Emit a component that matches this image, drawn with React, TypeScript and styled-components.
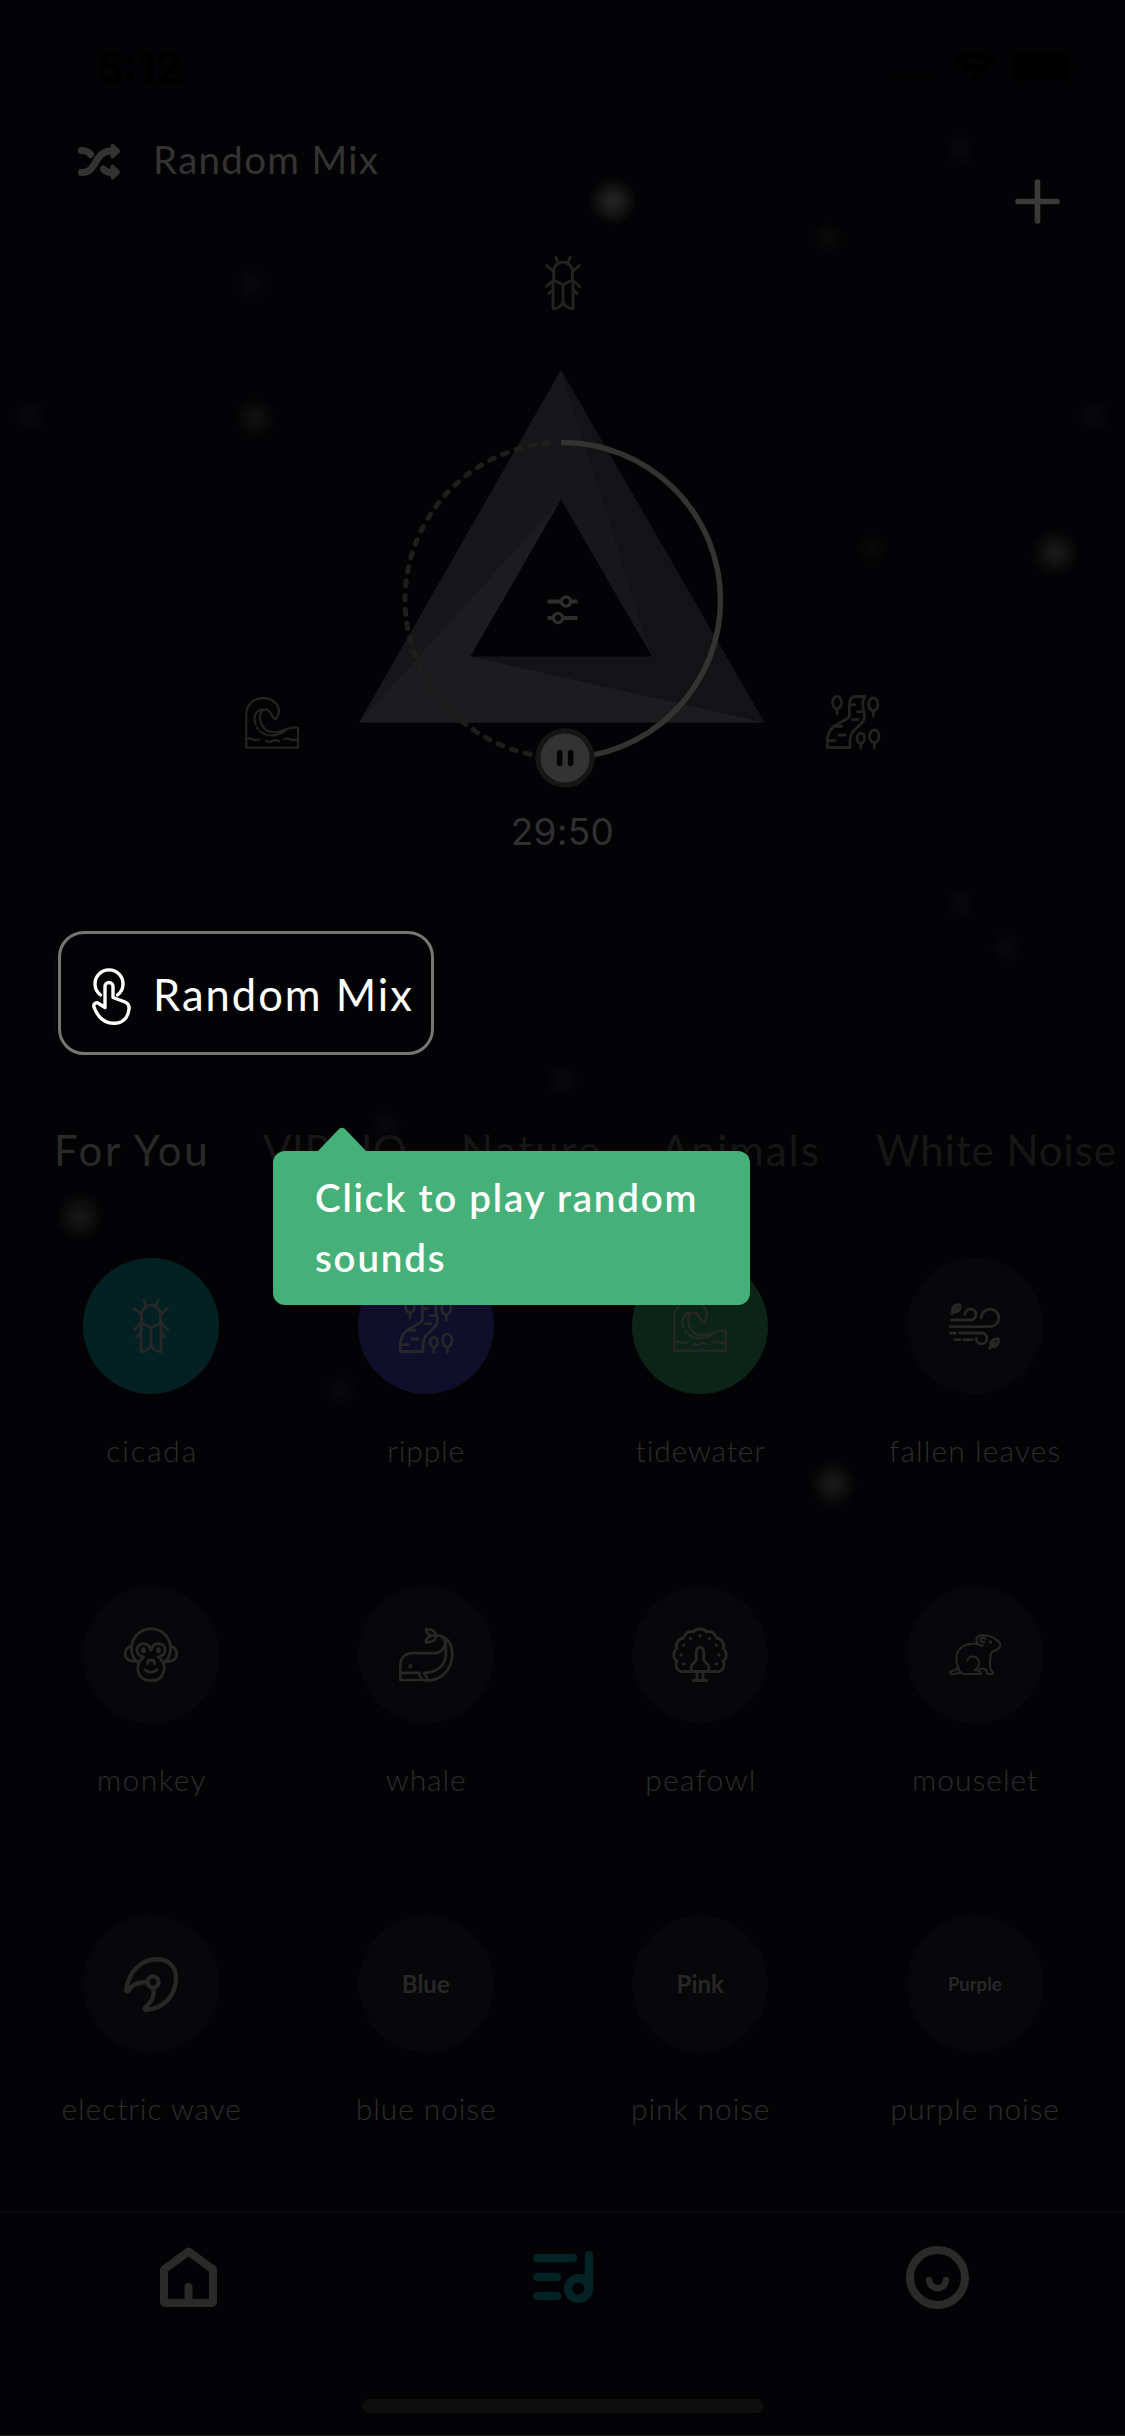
import React from 'react';
import styled, { createGlobalStyle } from 'styled-components';

const INK = '#030305';
const SOFT = '#333334';
const LABEL = '#232324';

const GlobalStyle = createGlobalStyle`
  * { box-sizing: border-box; }
  html, body { margin: 0; padding: 0; background: ${INK}; }
  body { font-family: Lato, 'Open Sans', sans-serif; }
  svg { display: block; flex: none; overflow: visible; }
`;

const Screen = styled.main`
  position: relative;
  width: 1125px;
  height: 2436px;
  display: flex;
  flex-direction: column;
  overflow: hidden;
  background: ${INK};
  border-bottom: 1px solid #202021;
`;

const Spaced = styled.span<{ $gap?: number }>`
  letter-spacing: ${(p) => p.$gap ?? 0}px;
  margin-right: ${(p) => -(p.$gap ?? 0)}px;
  white-space: nowrap;
`;

/* ---------- drifting lights ---------- */

const Mote = styled.i<{ $x: number; $y: number; $r: number; $c: string }>`
  position: absolute;
  left: ${(p) => p.$x - p.$r}px;
  top: ${(p) => p.$y - p.$r}px;
  width: ${(p) => p.$r * 2}px;
  height: ${(p) => p.$r * 2}px;
  border-radius: 50%;
  background: radial-gradient(circle, ${(p) => p.$c} 0%, ${(p) => p.$c} 12%, transparent 68%);
`;

const MOTES: [number, number, number, string][] = [
  [613, 201, 25, '#212121'],
  [960, 150, 17, '#08080a'],
  [828, 238, 17, '#09090a'],
  [252, 284, 17, '#08080b'],
  [255, 418, 22, '#0f0f10'],
  [30, 416, 18, '#08080b'],
  [1094, 416, 18, '#08080b'],
  [1055, 553, 25, '#171718'],
  [872, 549, 17, '#09090a'],
  [961, 903, 17, '#08080b'],
  [1006, 948, 17, '#08080b'],
  [562, 1080, 17, '#08080a'],
  [385, 1125, 18, '#08080c'],
  [80, 1217, 25, '#151516'],
  [341, 1390, 18, '#08080a'],
  [833, 1484, 25, '#171718'],
];

/* ---------- top ---------- */

const StatusBar = styled.div`
  height: 112px;
  padding: 41px 50px 0 97px;
  display: flex;
  justify-content: space-between;
  align-items: flex-start;
`;

const Clock = styled.span`
  font: 600 43px/52px Inter, 'Liberation Sans', sans-serif;
  color: #000;
`;

const StatusIcons = styled.div`
  display: flex;
  align-items: center;
  gap: 15px;
  padding-top: 10px;
`;

const Header = styled.header`
  height: 118px;
  padding: 21px 65px 0 78px;
  display: flex;
  justify-content: space-between;
  align-items: flex-start;
`;

const MixTitle = styled.div`
  display: flex;
  align-items: center;
  gap: 32px;
  height: 52px;
  color: ${SOFT};
  font-size: 38.5px;
  line-height: 52px;

  svg { margin-top: 4px; }
`;

const AddButton = styled.div`
  padding-top: 46px;
  color: #3a3a3a;
`;

/* ---------- mixer ---------- */

const Mixer = styled.section`
  height: 711px;
  padding-top: 26px;
  display: flex;
  flex-direction: column;
  align-items: center;
  color: ${LABEL};
`;

const DialRow = styled.div`
  margin-top: 56px;
  display: flex;
  justify-content: center;
  align-items: flex-end;
  gap: 56px;
`;

const Lifted = styled.div`
  padding-bottom: 41px;
`;

const Timer = styled.div`
  margin-top: 19px;
  font: 400 37px/45px Inter, 'Liberation Sans', sans-serif;
  letter-spacing: 0.3px;
  color: #303031;
`;

/* ---------- random mix button ---------- */

const MixButton = styled.div`
  position: relative;
  width: 353px;
  height: 113px;
  margin-left: 54px;
  border: 2px solid #08080a;
  border-radius: 25px;
`;

const MixHighlight = styled.div`
  position: absolute;
  left: 2px;
  top: -12px;
  width: 376px;
  height: 124px;
  padding: 0 0 0 31px;
  display: flex;
  align-items: center;
  gap: 22px;
  border: 3px solid #767677;
  border-radius: 26px;
  background: ${INK};
  color: #fff;
  font-size: 43.5px;

  svg { margin-top: 6px; }
  span { margin-top: 1px; }
`;

/* ---------- categories ---------- */

const Tabs = styled.nav`
  height: 204px;
  padding: 65px 0 0 54px;
  display: flex;
  align-items: flex-start;
`;

const Tab = styled.div<{ $w: number; $on?: boolean }>`
  width: ${(p) => p.$w}px;
  flex: none;
  font-size: 42px;
  line-height: 62px;
  color: ${(p) => (p.$on ? '#292929' : '#161617')};
`;

const TooltipBox = styled.div`
  position: absolute;
  left: 273px;
  top: 1151px;
  width: 477px;
  height: 154px;
  padding: 17px 40px 0 42px;
  border-radius: 12px;
  background: #45b078;
  color: #fff;
  font-weight: 600;
  font-size: 38.5px;
  line-height: 59.5px;
`;

const Pointer = styled.svg`
  position: absolute;
  left: 45px;
  top: -24px;
`;

/* ---------- sounds ---------- */

const SoundGrid = styled.section`
  height: 953px;
  padding: 0 13px 0 14px;
  display: grid;
  grid-template-columns: repeat(4, 1fr);
  grid-auto-rows: 329px;
`;

const Sound = styled.div`
  display: flex;
  flex-direction: column;
  align-items: center;
`;

const Disc = styled.div<{ $bg?: string; $size?: number }>`
  width: 136px;
  height: 136px;
  display: grid;
  place-items: center;
  border-radius: 50%;
  background: ${(p) => p.$bg ?? '#070709'};
  color: #272728;
  font-size: ${(p) => p.$size ?? 24}px;
  line-height: 30px;
  font-weight: 700;
`;

const SoundName = styled.div`
  margin-top: 36px;
  font-size: 30px;
  line-height: 40px;
  font-weight: 300;
  color: #2d2d2e;
`;

/* ---------- bottom ---------- */

const TabBar = styled.footer`
  height: 188px;
  padding-top: 32px;
  border-top: 2px solid #08080a;
  display: grid;
  grid-template-columns: repeat(3, 1fr);
  justify-items: center;
  align-items: flex-start;
  color: #2a2a2a;
`;

const TabSlot = styled.div<{ $on?: boolean }>`
  height: 64px;
  display: flex;
  align-items: center;
  color: ${(p) => (p.$on ? '#042324' : 'inherit')};
`;

const HomeIndicator = styled.div`
  width: 402px;
  height: 14px;
  align-self: center;
  border-radius: 7px;
  background: #0e0e0e;
`;

/* ---------- drawings ---------- */

type ArtProps = { w: number; h: number; sw?: number; children: React.ReactNode };
const Art = ({ w, h, sw = 2.6, children }: ArtProps) => (
  <svg width={w} height={h} viewBox={`0 0 ${w} ${h}`} fill="none" stroke="currentColor"
    strokeWidth={sw} strokeLinecap="round" strokeLinejoin="round">{children}</svg>
);

const Cicada = () => (
  <Art w={36} h={54} sw={2.9}>
    <path d="M8.6 25V15.5a9.4 9.4 0 0 1 18.8 0V25M10.8 1.3 13.6 7.6M25.2 1.3 22.4 7.6M1.6 9.5 8.4 15.4M34.4 9.5 27.6 15.4" />
    <path d="M1.3 30.5 8.6 24 18 28.8 27.4 24 34.7 30.5M4 37.5 8.3 33M32 37.5 27.7 33" />
    <path d="M8 25V52.7C14 52.5 18 49 18 43V29M28 25V52.7C22 52.5 18 49 18 43" />
  </Art>
);

const Wave = () => (
  <Art w={54} h={52} sw={2.2}>
    <path d="M30.5 22.5C32.8 19.5 34 17 34 13.5 33 6 27 1.2 18.5 1.2 8 1.2 1.2 8 1.2 18V50.6H53V31C50 30 47 30 42 32 35 35 25 38 19 31 13 24 14 12.6 20.5 12.6 27 12.6 26 21 30.5 22.5Z" />
    <path d="M17.5 12.6C10.5 13 8 20 10.5 27M12 30.5l1.2 1.8M15.5 34.5C23 40.5 33 39 40.5 33.5" />
    <path d="M1.5 42.3q3-1.6 6.2 0t6.3 0M21 44q3.4 1.6 6.4 0t6.6 0M39 42.3q3.4-1.6 6.4 0t6.6 0" />
  </Art>
);

const Ripple = () => (
  <Art w={54} h={54} sw={2.8}>
    <path d="M1.3 52.5V46C1.3 26 23.5 28 23.5 20 23.5 14 21.5 2 29 1.5H39C34 8 38.5 15 38.5 22 38.5 31 24 33 24 45V52.5Z" />
    <path d="M8 31.3H16M26.7 24.7H32M25 9.7H28.5M31.5 16.7H36.5M13 40H19M2 45.7H9" />
    <ellipse cx="11" cy="7.5" rx="4.4" ry="6.2" /><path d="M11 13.7V19" />
    <ellipse cx="47.3" cy="9.3" rx="4.7" ry="6.4" /><path d="M47.3 15.7V21" />
    <ellipse cx="34.8" cy="43.2" rx="3.7" ry="5" /><path d="M34.8 48.2V53" />
    <ellipse cx="48.3" cy="41.3" rx="4.7" ry="6.4" /><path d="M48.3 47.7V53" />
  </Art>
);

const Leaves = () => (
  <Art w={51} h={47} sw={2.8}>
    <path d="M2.5 17H21.5A5.5 5.5 0 1 0 16 11.5M1.3 23.7H41A8.8 8.8 0 1 0 32.2 14.9M1.3 30H6.5M10.5 30H32.5A5.4 5.4 0 1 1 27.1 35.4M6 36.6H11M14.5 36.6H23.5" />
    <path d="M2.8 10.8 8 5M4 9C2.5 4 6 1.3 11 1.6 12 6.5 9 10.5 4 9ZM40.6 45.4 46 39.5M42 43.5C40.5 38.5 44 35.6 49.4 36 50 41 47 45 42 43.5Z" />
  </Art>
);

const Monkey = () => (
  <Art w={54} h={54} sw={2.9}>
    <path d="M14.5 35.5A19.6 19.6 0 1 1 39.5 35.5M8 18.2C3.5 18 1.3 22 1.3 26 1.3 31 5 34 13 33M46 18.2C50.5 18 52.7 22 52.7 26 52.7 31 49 34 41 33" />
    <path d="M19.5 29C10.5 27.5 11 15.7 19.5 15.7 24 15.7 26 18.5 27 22 28 18.5 30 15.7 34.5 15.7 43 15.7 43.5 27.5 34.5 29M19.5 29C9.5 37 13 52.6 27 52.6 41 52.6 44.5 37 34.5 29" />
    <ellipse cx="19.5" cy="22.2" rx="1" ry="1.8" /><ellipse cx="34.5" cy="22.2" rx="1" ry="1.8" />
    <path d="M23.5 35.5q0-3.5 3.5-3.5t3.5 3.5M21 41.8q6 5 12 0" />
  </Art>
);

const Whale = () => (
  <Art w={54} h={54} sw={2.7}>
    <path d="M37 7.5C48 7 53.2 16 53.2 26 53.2 42 42 52.6 28 52.6 23 52.6 20.2 49 20.2 44.8H1.3V38C1.3 29 7 25.2 14 25.2H35C42 25.2 46.5 20 46.5 13" />
    <path d="M43 9.5C46.5 11 47 15 47 25 47 38 37 44.8 25 44.8L28.5 51M1.3 44.8V52H22" />
    <path d="M27 1.4C33 1 36.5 3 37 7.5 31 8.5 27.5 6 27 1.4ZM37 7.5C37 12.5 33 14.5 27 14.3 27 9.5 31 7.5 37 7.5Z" />
    <circle cx="11.3" cy="38.3" r=".8" />
  </Art>
);

const PEACOCK_EYES = [[10.7, 36], [8, 27], [10.7, 17.3], [17.5, 10.5], [27, 7.8], [36.5, 10.5], [43.3, 17.3], [46, 27], [43.3, 36]];
const Peafowl = () => (
  <Art w={54} h={54} sw={2.8}>
    <path d="M19 43.5H11A6.5 6.5 0 0 1 4.2 33.5 8 8 0 0 1 3.8 20.5 8 8 0 0 1 10.5 10 8 8 0 0 1 20.5 3.8 9 9 0 0 1 33.5 3.8 8 8 0 0 1 43.5 10 8 8 0 0 1 50.2 20.5 8 8 0 0 1 49.8 33.5 6.5 6.5 0 0 1 43 43.5H35" />
    <path d="M23.3 23a3.7 3.7 0 0 1 7.4 0V32L35.3 37.5C37 40 35.5 43.5 33 43.5H21C18.500 43.5 17 40 18.7 37.5L23.3 32ZM24 43.5V52M30 43.5V52M20 52.5H34" />
    {PEACOCK_EYES.map(([x, y]) => <circle key={`${x}-${y}`} cx={x} cy={y} r=".7" strokeWidth="2" />)}
  </Art>
);

const Mouse = () => (
  <Art w={52} h={42} sw={2.1}>
    <path d="M29 10C14 8 7 16 7.5 26 7.8 32 10 39.5 15 40H32C32 37 29 36 25.5 36.3 29 34 31.5 30 29.5 26 27 21 20 21.5 18.5 26" />
    <path d="M34 11.5C28 12.5 26 6 28.5 3 31 .5 34 .8 37 1.8 43 1 45 4.5 49 7 53 10 51 14 48 15.5 45 17 42.5 17 41.8 20 41.2 25 40 33 42 36 44 37.5 44.5 38.5 44 40H38.5C38 37 36.5 35 34.5 34.5L31 34.8M35.5 7.8C34.5 8.8 31.5 8 31.5 5.8 31.5 3.5 35 2.8 36.5 5" />
    <path d="M9.5 33C7.5 38 1.2 35.5 1.2 38.5 1.2 41 8 40 11.5 38.5" />
    <circle cx="41.5" cy="8" r=".6" />
  </Art>
);

const ElectricWave = () => (
  <Art w={54} h={55} sw={4.4}>
    <path d="M24 25.500C14 24.500 8 28 5 33 4 35 2 34.500 2.200 33 4.500 14 18 2.300 33 2.300 44.500 2.300 52 10 52 21 52 39 39 52 22.500 52.700 20.500 52.700 20.500 51 22 49.800 28.500 44 31 38 29.300 31" />
    <circle cx="29" cy="25" r="5.6" />
  </Art>
);

const Shuffle = () => (
  <svg width="43" height="37" viewBox="0 0 43 37" fill="none" stroke="currentColor" strokeWidth="7" strokeLinecap="round" strokeLinejoin="round">
    <path d="M3.5 29.5C20 30 15 8.500 33 8M3.5 7.5C8 7.500 10.500 8.500 12.500 11.500M25.500 26C27.500 28.500 30 29.500 33 29.500" />
    <path d="M34.500 3 40 8 34.500 13.500ZM34.500 23.500 40 29.300 34.500 34.500Z" strokeWidth="4" fill="currentColor" />
  </svg>
);

const TapHand = () => (
  <Art w={39} h={57} sw={3.4}>
    <path d="M8.500 27A14 14 0 1 1 25.500 27" />
    <path d="M13 39.500V18.500a4 4 0 0 1 8 0V29.500L33 34C36.500 35.500 37.300 38 37 41 36 50 30.500 55.300 22 55.300 12 55.300 6 50 2 39 1 35.500 4.500 33.500 7.500 36Z" />
  </Art>
);

const WifiGlyph = () => (
  <svg width="44" height="32" viewBox="0 0 44 32" fill="none" stroke="#000" strokeWidth="6.5">
    <path d="M2.500 12.500C13 1.500 31 1.500 41.500 12.500M10 20.500C16.500 13.500 27.500 13.500 34 20.500" /><circle cx="22" cy="27" r="3" fill="#000" stroke="none" />
  </svg>
);

const BatteryGlyph = () => (
  <svg width="64" height="32" viewBox="0 0 64 32">
    <rect x="1" y="1" width="59" height="30" rx="9" fill="none" stroke="#020203" strokeWidth="1.5" />
    <rect x="3" y="3.500" width="55" height="25" rx="6" fill="#000" /><rect x="61" y="11" width="3" height="10" rx="1.5" fill="#020203" />
  </svg>
);

const SignalDots = () => (
  <svg width="50" height="32" viewBox="0 0 50 32" fill="#020203">
    {[4, 18, 32, 46].map((x) => <circle key={x} cx={x} cy="25" r="3.5" />)}
  </svg>
);

/* triangle, countdown ring, level sliders and pause knob */
const Dial = () => (
  <svg width="415" height="424" viewBox="355 366 415 424" fill="none">
    <path d="M561 370 359 722.500H764.500Z" fill="#171719" />
    <path d="M561 370 652 656.500 470.500 656.500 764.500 722.500Z" fill="#131315" />
    <path d="M359 722.500 561 499.500 470.500 656.500 764.500 722.500Z" fill="#1c1c1e" />
    <path d="M561 499.500 470.500 656.500H652Z" fill={INK} />
    <path d="M549 443A158 158 0 0 0 405 600 158 158 0 0 0 548 757" stroke="#1e1e1f" strokeWidth="5" strokeDasharray="5 9.3" strokeLinecap="round" />
    <path d="M561 442.500H563A158 158 0 0 1 720.500 600 158 158 0 0 1 563 758" stroke="#333334" strokeWidth="5.500" />
    <circle cx="565" cy="758" r="29.700" fill="#161617" />
    <circle cx="565" cy="758" r="24.500" fill="#333334" />
    <path d="M559.700 752.800V763.200M570.600 752.800V763.200" stroke={INK} strokeWidth="5.600" strokeLinecap="round" />
    <g stroke="#2e2e2f" strokeWidth="4">
      <path d="M547.500 601.500H561M571 601.500H577.500M547.500 618H553M563 618H577.500" />
      <circle cx="566" cy="601.500" r="4.600" strokeWidth="3.300" /><circle cx="558" cy="618" r="4.600" strokeWidth="3.300" />
    </g>
  </svg>
);

const SOUNDS: { name: string; gap: number; art: React.ReactNode; bg?: string; size?: number }[] = [
  { name: 'cicada', gap: 1.9, art: <Cicada />, bg: '#032122' },
  { name: 'ripple', gap: 0.85, art: <Ripple />, bg: '#0f0f2c' },
  { name: 'tidewater', gap: 0.85, art: <Wave />, bg: '#0c2418' },
  { name: 'fallen leaves', gap: 1.1, art: <Leaves /> },
  { name: 'monkey', gap: 1.5, art: <Monkey /> },
  { name: 'whale', gap: 0.9, art: <Whale /> },
  { name: 'peafowl', gap: 1.3, art: <Peafowl /> },
  { name: 'mouselet', gap: 1, art: <Mouse /> },
  { name: 'electric wave', gap: 0.9, art: <ElectricWave /> },
  { name: 'blue noise', gap: 0.9, art: 'Blue' },
  { name: 'pink noise', gap: 0.9, art: 'Pink' },
  { name: 'purple noise', gap: 0.85, art: 'Purple', size: 18.5 },
];

const TABS: { name: string; gap: number; w: number }[] = [
  { name: 'For You', gap: 2.6, w: 209 },
  { name: 'VIP HQ', gap: 0.6, w: 198 },
  { name: 'Nature', gap: 2.4, w: 200 },
  { name: 'Animals', gap: 2.1, w: 215 },
  { name: 'White Noise', gap: 0.96, w: 245 },
];

export default function App() {
  return (
    <Screen>
      <GlobalStyle />
      {MOTES.map(([x, y, r, c]) => <Mote key={`${x}-${y}`} $x={x} $y={y} $r={r} $c={c} />)}

      <StatusBar>
        <Clock>5:12</Clock>
        <StatusIcons>
          <SignalDots />
          <WifiGlyph />
          <BatteryGlyph />
        </StatusIcons>
      </StatusBar>

      <Header>
        <MixTitle><Shuffle /><Spaced $gap={1.3}>Random Mix</Spaced></MixTitle>
        <AddButton>
          <Art w={45} h={45} sw={5.6}><path d="M22.500 3V42M3 22.500H42" /></Art>
        </AddButton>
      </Header>

      <Mixer>
        <Cicada />
        <DialRow>
          <Lifted><Wave /></Lifted>
          <Dial />
          <Lifted><Ripple /></Lifted>
        </DialRow>
        <Timer>29:50</Timer>
      </Mixer>

      <MixButton>
        <MixHighlight><TapHand /><Spaced $gap={2}>Random Mix</Spaced></MixHighlight>
      </MixButton>

      <Tabs>
        {TABS.map((t, i) => <Tab key={t.name} $w={t.w} $on={i === 0}><Spaced $gap={t.gap}>{t.name}</Spaced></Tab>)}
      </Tabs>

      <SoundGrid>
        {SOUNDS.map((s) => (
          <Sound key={s.name}>
            <Disc $bg={s.bg} $size={s.size}>{s.art}</Disc>
            <SoundName><Spaced $gap={s.gap}>{s.name}</Spaced></SoundName>
          </Sound>
        ))}
      </SoundGrid>

      <TabBar>
        <TabSlot>
          <Art w={57} h={60} sw={8}><path d="M5 22.500 29.500 4.500 54 22.500V54Q54 56 52 56H7Q5 56 5 54ZM29.500 54V40" /></Art>
        </TabSlot>
        <TabSlot $on>
          <Art w={60} h={54} sw={8.5}>
            <path d="M4.300 8H40M4.300 27H24M4.300 46H24M56 5V38" /><circle cx="45.500" cy="38.500" r="10.300" />
          </Art>
        </TabSlot>
        <TabSlot>
          <Art w={63} h={63} sw={8}><circle cx="31.500" cy="31.500" r="27.500" /><path d="M23 34C24.500 45 38.500 45 40 34" strokeWidth="6.500" /></Art>
        </TabSlot>
      </TabBar>
      <HomeIndicator />

      <TooltipBox>
        <Pointer width="48" height="25" viewBox="0 0 48 25"><path d="M0 25V24L20 3Q24-1.500 28 3L48 24V25Z" fill="#45b078" /></Pointer>
        <Spaced $gap={1.8}>Click to play random</Spaced><br />
        <Spaced $gap={1.8}>sounds</Spaced>
      </TooltipBox>
    </Screen>
  );
}
